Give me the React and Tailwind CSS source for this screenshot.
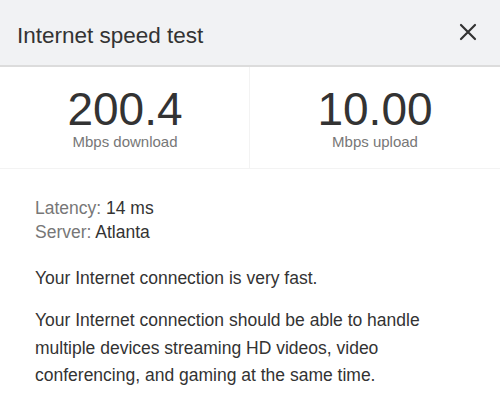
export default function App() {
  return (
    <div className="w-[500px] h-[405px] bg-white overflow-hidden" style={{ fontFamily: '"Liberation Sans", Arial, sans-serif' }}>
      <div className="h-[67px] bg-[#f1f2f4] border-b-2 border-[#dcdcdc] flex items-center justify-between pl-[17px] pr-[23px]">
        <span className="text-[22.5px] text-[#333] pt-[6px]">Internet speed test</span>
        <svg width="18" height="18" viewBox="0 0 18 18" className="mt-[-2px]">
          <path d="M2 2L16 16M16 2L2 16" stroke="#333" strokeWidth="2.2" strokeLinecap="round" />
        </svg>
      </div>
      <div className="grid grid-cols-2 h-[102px] border-b border-[#f3f3f3]">
        <div className="flex flex-col items-center pt-[18px] pl-[1px] border-r border-[#f3f3f3]">
          <span className="text-[46px] leading-[48px] text-[#333]">200.4</span>
          <span className="text-[15px] leading-[18px] text-[#777]">Mbps download</span>
        </div>
        <div className="flex flex-col items-center pt-[18px]">
          <span className="text-[46px] leading-[48px] text-[#333]">10.00</span>
          <span className="text-[15px] leading-[18px] text-[#777]">Mbps upload</span>
        </div>
      </div>
      <div className="pl-[35px] pt-[27px] text-[17.5px] text-[#333]">
        <div className="leading-[24px]"><span className="text-[#777]">Latency:</span> 14 ms</div>
        <div className="leading-[24px]"><span className="text-[#777]">Server:</span> Atlanta</div>
        <div className="mt-[22px] leading-[24px]">Your Internet connection is very fast.</div>
        <div className="mt-[17px] leading-[27.5px] w-[420px]">Your Internet connection should be able to handle multiple devices streaming HD videos, video conferencing, and gaming at the same time.</div>
      </div>
    </div>
  );
}
